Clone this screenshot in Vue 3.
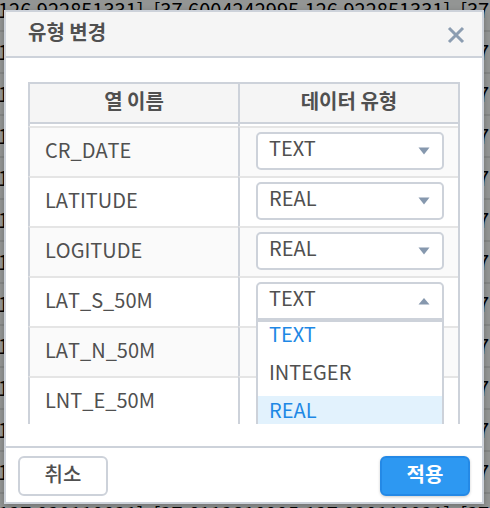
<script setup>
import { ref } from 'vue'

const rows = ref([
  { name: 'CR_DATE', type: 'TEXT' },
  { name: 'LATITUDE', type: 'REAL' },
  { name: 'LOGITUDE', type: 'REAL' },
  { name: 'LAT_S_50M', type: 'TEXT', open: true },
  { name: 'LAT_N_50M', type: 'TEXT' },
  { name: 'LNT_E_50M', type: 'TEXT' }
])
const types = ['TEXT', 'INTEGER', 'REAL']
const hovered = 'REAL'

const first = '126.922851331], [37.6004242995,126.922851331], [37'
const last = '127.020110021], [37.6112810995,127.020110021], [37'
const lines = Array.from({ length: 13 }, (_, i) => (i < 12 ? first : last))

function choose(row, type) {
  row.type = type
  row.open = false
}
</script>

<template>
  <main class="page">
    <div class="sheet" aria-hidden="true">
      <div v-for="(line, i) in lines" :key="i" class="line">{{ line }}</div>
    </div>

    <section class="dialog" role="dialog" aria-labelledby="dialog-title">
      <header class="head">
        <h1 id="dialog-title">유형 변경</h1>
        <button class="close" type="button" aria-label="닫기">
          <svg width="18" height="18" viewBox="0 0 18 18">
            <path d="M2 2 16 16M16 2 2 16" fill="none" stroke="#8c9db1" stroke-width="3" />
          </svg>
        </button>
      </header>

      <div class="body">
        <div class="viewport">
          <table>
            <thead>
              <tr>
                <th scope="col">열 이름</th>
                <th scope="col">데이터 유형</th>
              </tr>
            </thead>
            <tbody>
              <tr class="gap"><td></td><td></td></tr>
              <tr v-for="row in rows" :key="row.name" class="row">
                <td class="name">{{ row.name }}</td>
                <td class="type">
                  <div class="picker" :class="{ open: row.open }">
                    <button
                      class="value"
                      type="button"
                      aria-haspopup="listbox"
                      :aria-expanded="!!row.open"
                      :aria-label="row.name + ' ' + row.type"
                      @click="row.open = !row.open"
                    >
                      <span>{{ row.type }}</span>
                      <svg width="12" height="8" viewBox="0 0 12 8">
                        <path v-if="row.open" d="M0.5 7.5 6 1 11.5 7.5Z" fill="#8698ae" />
                        <path v-else d="M0.5 0.5H11.5L6 7.5Z" fill="#8698ae" />
                      </svg>
                    </button>
                    <ul v-if="row.open" class="menu" role="listbox">
                      <li
                        v-for="type in types"
                        :key="type"
                        role="option"
                        :aria-selected="type === row.type"
                        :class="{ selected: type === row.type, hovered: type === hovered }"
                        @click="choose(row, type)"
                      >{{ type }}</li>
                    </ul>
                  </div>
                </td>
              </tr>
            </tbody>
          </table>
        </div>
      </div>

      <footer class="foot">
        <button class="btn" type="button">취소</button>
        <button class="btn primary" type="button">적용</button>
      </footer>
    </section>
  </main>
</template>

<style>
body {
  margin: 0;
  background: #939594;
}
</style>

<style scoped>
.page {
  position: relative;
  display: flow-root;
  height: 100vh;
  overflow: hidden;
  box-sizing: border-box;
  padding: 10px 6px 4px 4px;
  font-family: "Noto Sans CJK KR", sans-serif;
  font-size: 20px;
  color: #505050;
}

.page * {
  box-sizing: border-box;
}

.sheet {
  position: absolute;
  inset: -10px 0 auto -2px;
  color: #000;
}

.line {
  height: 42px;
  border-bottom: 2px solid #858786;
  line-height: 40px;
  white-space: nowrap;
}

.dialog {
  position: relative;
  display: flex;
  flex-direction: column;
  height: 100%;
  border: 2px solid #cdd2da;
  background: #fff;
  box-shadow: 0 2px 6px rgba(0, 0, 0, 0.25);
}

.head {
  display: flex;
  align-items: center;
  justify-content: space-between;
  height: 46px;
  padding: 0 17px 0 22px;
  border-bottom: 2px solid #cdd2da;
  background: #f5f5f5;
}

h1 {
  margin: 0;
  font-size: 20px;
  line-height: 40px;
  font-weight: 700;
  padding-bottom: 4px;
}

button {
  font: inherit;
  color: inherit;
  cursor: pointer;
}

.close {
  display: flex;
  padding: 2px 0 0;
  border: 0;
  background: none;
}

.body {
  flex: 1;
  min-height: 0;
  padding: 24px 22px 22px;
}

.viewport {
  height: 100%;
  overflow: hidden;
}

table {
  width: 100%;
  table-layout: fixed;
  border-collapse: separate;
  border-spacing: 0;
  border-right: 2px solid #cdd2da;
}

th,
td {
  padding: 0;
  border-left: 2px solid #cdd2da;
}

th {
  height: 42px;
  border-top: 2px solid #cdd2da;
  border-bottom: 2px solid #cdd2da;
  background: #f5f5f5;
  font-weight: 700;
  line-height: 32px;
  padding-bottom: 4px;
}

th:first-child {
  width: 210px;
}

.gap td {
  height: 2px;
}

.row td {
  height: 50px;
  border-top: 2px solid #e5e5e5;
}

.row:nth-child(even) td {
  background: #fafafa;
}

.row .name {
  padding: 0 0 4px 15px;
  line-height: 30px;
  font-kerning: none;
}

.row .type {
  padding: 0 14px 2px 16px;
}

.picker {
  position: relative;
}

.value {
  display: flex;
  align-items: center;
  justify-content: space-between;
  width: 100%;
  height: 38px;
  padding: 0 12px 0 11px;
  border: 2px solid #cdd2da;
  border-radius: 5px;
  background: #fff;
}

.value span {
  line-height: 28px;
  padding-bottom: 6px;
}

.open .value {
  border-radius: 5px 5px 0 0;
}

.menu {
  position: absolute;
  z-index: 1;
  top: 36px;
  left: 0;
  right: 0;
  margin: 0;
  padding: 0;
  border: 2px solid #cdd2da;
  border-top-width: 4px;
  background: #fff;
  list-style: none;
  overflow: hidden;
}

.menu li {
  height: 38px;
  padding-left: 11px;
  line-height: 28px;
}

.menu li:first-child {
  margin-top: -2px;
}

.menu .selected,
.menu .hovered {
  color: #1e88e5;
}

.menu .hovered {
  background: #e2f2fd;
}

.foot {
  display: flex;
  justify-content: space-between;
  padding: 8px 12px 6px;
  border-top: 2px solid #cdd2da;
}

.btn {
  width: 90px;
  height: 40px;
  padding: 0 0 4px;
  border: 2px solid #cdd2da;
  border-radius: 6px;
  background: #fff;
  line-height: 30px;
  font-weight: 500;
}

.primary {
  border-color: #2489e6;
  background: #2d98f2;
  color: #fff;
  font-weight: 700;
  box-shadow: 0 1px 3px rgba(0, 0, 0, 0.2);
}
</style>
